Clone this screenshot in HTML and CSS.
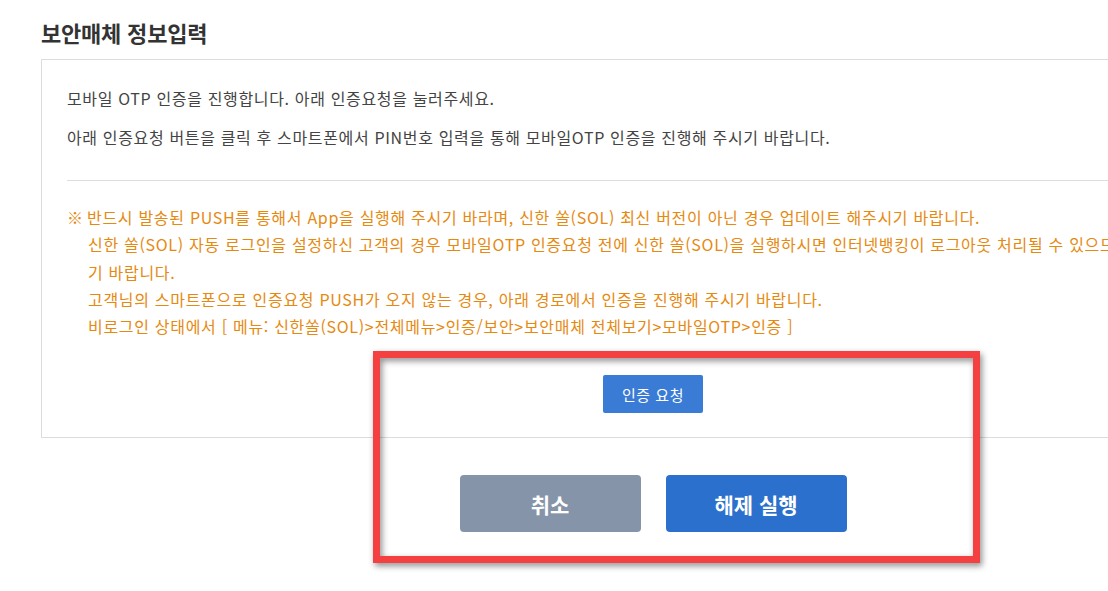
FILE: index.html
```html
<!DOCTYPE html>
<html lang="ko">
<head>
<meta charset="utf-8">
<link rel="stylesheet" href="styles.css">
</head>
<body>
<div class="page">
  <h2 class="title">보안매체 정보입력</h2>
  <div class="panel">
    <p class="desc">모바일 OTP 인증을 진행합니다. 아래 인증요청을 눌러주세요.</p>
    <p class="desc second">아래 인증요청 버튼을 클릭 후 스마트폰에서 PIN번호 입력을 통해 모바일OTP 인증을 진행해 주시기 바랍니다.</p>
    <hr class="sep">
    <div class="notice">
      <div class="n-line"><span class="mark">※</span>반드시 발송된 PUSH를 통해서 App을 실행해 주시기 바라며, 신한 쏠(SOL) 최신 버전이 아닌 경우 업데이트 해주시기 바랍니다.</div>
      <div class="n-line indent">신한 쏠(SOL) 자동 로그인을 설정하신 고객의 경우 모바일OTP 인증요청 전에 신한 쏠(SOL)을 실행하시면 인터넷뱅킹이 로그아웃 처리될 수 있으므로 유의하여 주시</div>
      <div class="n-line indent">기 바랍니다.</div>
      <div class="n-line indent">고객님의 스마트폰으로 인증요청 PUSH가 오지 않는 경우, 아래 경로에서 인증을 진행해 주시기 바랍니다.</div>
      <div class="n-line indent">비로그인 상태에서 [ 메뉴: 신한쏠(SOL)&gt;전체메뉴&gt;인증/보안&gt;보안매체 전체보기&gt;모바일OTP&gt;인증 ]</div>
    </div>
    <div class="req-row">
      <button class="btn-req" type="button">인증 요청</button>
    </div>
  </div>
  <div class="actions">
    <button class="btn btn-cancel" type="button">취소</button>
    <button class="btn btn-exec" type="button">해제 실행</button>
  </div>
</div>
<div class="highlight"></div>
</body>
</html>
```
FILE: styles.css
```css
html, body {
  margin: 0;
  padding: 0;
  background: #ffffff;
  overflow: hidden;
}
body {
  font-family: "Noto Sans CJK KR", "Noto Sans", sans-serif;
  color: #444;
  width: 1108px;
  height: 591px;
  position: relative;
}
.page {
  padding: 18px 0 0 41px;
  width: 1224px;
}
.title {
  margin: 0;
  font-size: 22px;
  line-height: 28px;
  font-weight: 700;
  color: #333;
  letter-spacing: -0.2px;
}
.panel {
  margin-top: 13px;
  border: 1px solid #dcdcdc;
  padding: 26px 25px 24px 25px;
  box-sizing: border-box;
  width: 1224px;
}
.desc {
  margin: 0;
  font-size: 16px;
  line-height: 24px;
  color: #444;
  letter-spacing: 0.65px;
  white-space: nowrap;
}
.desc.second {
  margin-top: 15px;
}
.sep {
  margin: 31px 0 0 0;
  border: 0;
  border-top: 1px solid #dddddd;
  height: 0;
}
.notice {
  margin-top: 23px;
  color: #e6890f;
  font-size: 16px;
  line-height: 27.3px;
  letter-spacing: 0.7px;
}
.n-line {
  white-space: nowrap;
}
.mark {
  display: inline-block;
  width: 20px;
}
.indent {
  padding-left: 21px;
}
.req-row {
  display: flex;
  justify-content: center;
  margin-top: 35px;
}
.btn-req {
  width: 100px;
  height: 38px;
  border: 0;
  border-radius: 2px;
  background: #3a7bd5;
  color: #fff;
  font-family: inherit;
  font-size: 15px;
  letter-spacing: 0.5px;
  padding: 0;
}
.actions {
  display: flex;
  justify-content: center;
  gap: 25px;
  margin-top: 37px;
}
.btn {
  width: 181px;
  height: 57px;
  border: 0;
  border-radius: 4px;
  color: #fff;
  font-family: inherit;
  font-size: 21px;
  font-weight: 700;
  padding: 0;
}
.btn-cancel {
  background: #8594a8;
}
.btn-exec {
  background: #2c70cd;
}
.highlight {
  position: absolute;
  left: 373px;
  top: 351px;
  width: 607px;
  height: 212px;
  box-sizing: border-box;
  border: 7px solid #f44040;
  filter: drop-shadow(2px 3px 3px rgba(0, 0, 0, 0.45));
  pointer-events: none;
}
```
